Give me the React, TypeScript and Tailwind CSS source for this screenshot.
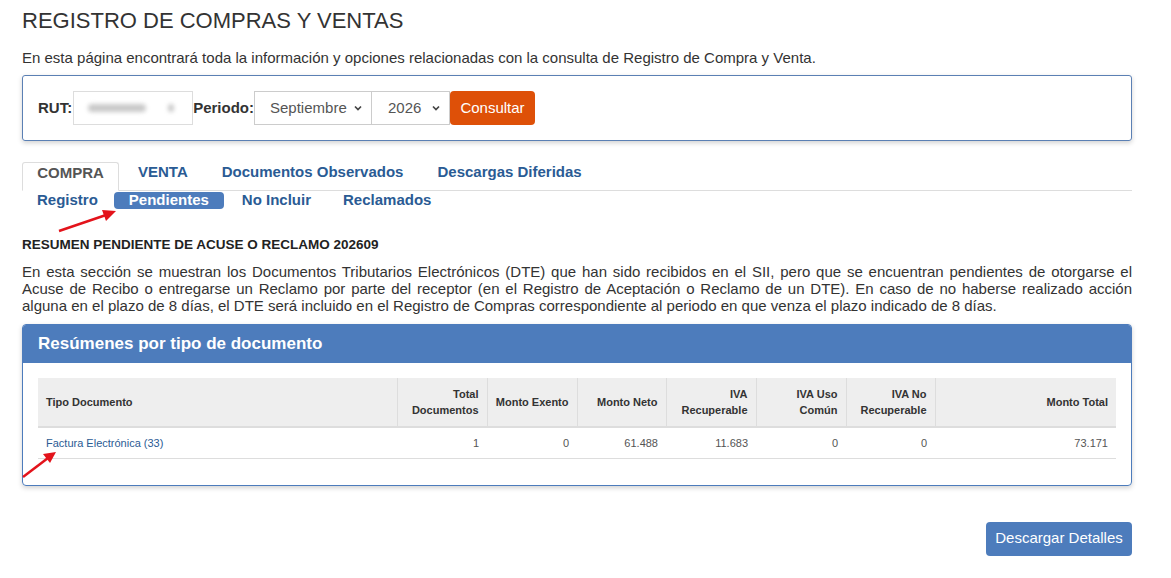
import React from "react";

const cols = [
  { label: ["Tipo Documento"], w: "w-[359px]", left: true },
  { label: ["Total", "Documentos"], w: "w-[90px]" },
  { label: ["Monto Exento"], w: "w-[90px]" },
  { label: ["Monto Neto"], w: "w-[89px]" },
  { label: ["IVA", "Recuperable"], w: "w-[90px]" },
  { label: ["IVA Uso", "Común"], w: "w-[90px]" },
  { label: ["IVA No", "Recuperable"], w: "w-[89px]" },
  { label: ["Monto Total"], w: "" },
];

const row = ["Factura Electrónica (33)", "1", "0", "61.488", "11.683", "0", "0", "73.171"];

function Chevron() {
  return (
    <svg width="10" height="10" viewBox="0 0 10 10">
      <path d="M2 3.5 5 6.5 8 3.5" fill="none" stroke="#444" strokeWidth="1.7" />
    </svg>
  );
}

export default function App() {
  return (
    <div className="relative min-h-[578px] bg-white px-[22px] pt-[8px] text-[#333] font-['Liberation_Sans',Arial,sans-serif]">
      <h1 className="text-[22px] leading-[26px] font-normal text-[#333]">
        REGISTRO DE COMPRAS Y VENTAS
      </h1>
      <p className="mt-[15px] text-[15px] leading-[17px] text-[#333]">
        En esta página encontrará toda la información y opciones relacionadas con la consulta de Registro de Compra y Venta.
      </p>

      <div className="mt-[9px] w-[1110px] h-[66px] rounded-[3px] border border-[#5b80b4] shadow-[0_2px_5px_rgba(0,0,0,0.18)] flex items-center px-[15px]">
        <span className="font-bold text-[15px]">RUT:</span>
        <div className="ml-[1px] h-[34px] w-[120px] border border-[#ddd] flex items-center px-[14px] gap-[22px]">
          <span className="h-[8px] w-[58px] rounded bg-[#c9c9c9] blur-[2px]" />
          <span className="h-[8px] w-[6px] rounded bg-[#c9c9c9] blur-[2px]" />
        </div>
        <span className="font-bold text-[15px]">Periodo:</span>
        <div className="h-[34px] w-[118px] border border-[#ccc] flex items-center justify-between pl-[15px] pr-[8px] text-[15px] text-[#555]">
          Septiembre
          <Chevron />
        </div>
        <div className="h-[34px] w-[78px] border border-l-0 border-[#ccc] flex items-center justify-between pl-[16px] pr-[8px] text-[15px] text-[#555]">
          2026
          <Chevron />
        </div>
        <button className="h-[34px] w-[85px] rounded-[4px] bg-[#de5008] text-white text-[15px]">
          Consultar
        </button>
      </div>

      <div className="mt-[21px] w-[1110px] flex items-end border-b border-[#ddd] h-[29px] text-[15px] font-bold">
        <div className="h-[29px] -mb-px w-[97px] pb-[7px] border border-[#ddd] border-b-white bg-white rounded-t-[3px] flex items-center justify-center text-[#555]">
          COMPRA
        </div>
        <div className="h-[29px] pb-[7px] flex items-center ml-[19px] text-[#2a5b94]">VENTA</div>
        <div className="h-[29px] pb-[7px] flex items-center ml-[34px] text-[#2a5b94]">Documentos Observados</div>
        <div className="h-[29px] pb-[7px] flex items-center ml-[34px] text-[#2a5b94]">Descargas Diferidas</div>
      </div>
      <div className="flex items-center text-[15px] font-bold text-[#2a5b94] h-[18px]">
        <span className="ml-[15px]">Registro</span>
        <span className="ml-[16px] h-[17px] w-[110px] rounded-[4px] bg-[#4d7cbc] text-white flex items-center justify-center">
          Pendientes
        </span>
        <span className="ml-[18px]">No Incluir</span>
        <span className="ml-[32px]">Reclamados</span>
      </div>

      <h2 className="mt-[28px] text-[13.5px] leading-[16px] font-bold text-[#222]">
        RESUMEN PENDIENTE DE ACUSE O RECLAMO 202609
      </h2>
      <p className="mt-[10px] w-[1110px] text-justify text-[15px] leading-[17px] text-[#333]">
        En esta sección se muestran los Documentos Tributarios Electrónicos (DTE) que han sido recibidos en el SII, pero que se encuentran pendientes de otorgarse el Acuse de Recibo o entregarse un Reclamo por parte del receptor (en el Registro de Aceptación o Reclamo de un DTE). En caso de no haberse realizado acción alguna en el plazo de 8 días, el DTE será incluido en el Registro de Compras correspondiente al periodo en que venza el plazo indicado de 8 días.
      </p>

      <div className="mt-[10px] w-[1110px] rounded-[4px] border border-[#4d7cbc] shadow-[0_2px_5px_rgba(0,0,0,0.18)] overflow-hidden">
        <div className="h-[38px] bg-[#4d7cbc] flex items-center px-[15px] text-white font-bold text-[17px]">
          Resúmenes por tipo de documento
        </div>
        <div className="px-[15px] pt-[15px] pb-[26px]">
          <table className="w-[1078px] border-collapse text-[11px]">
            <thead>
              <tr className="bg-[#eeeeee] h-[49px] border-b-2 border-[#ddd]">
                {cols.map((c, i) => (
                  <th
                    key={i}
                    className={`${c.w} px-[8px] font-bold leading-[16px] text-[#333] ${c.left ? "text-left" : "text-right"} ${i < cols.length - 1 ? "border-r border-[#ddd]" : ""}`}
                  >
                    {c.label.map((l, j) => (
                      <div key={j}>{l}</div>
                    ))}
                  </th>
                ))}
              </tr>
            </thead>
            <tbody>
              <tr className="h-[31px] border-b border-[#ddd]">
                {row.map((v, i) => (
                  <td
                    key={i}
                    className={`px-[8px] ${i === 0 ? "text-left text-[#2a5b94]" : "text-right text-[#555555]"}`}
                  >
                    {v}
                  </td>
                ))}
              </tr>
            </tbody>
          </table>
        </div>
      </div>

      <div className="mt-[36px] w-[1110px] flex justify-end">
        <button className="h-[34px] w-[146px] rounded-[4px] bg-[#4d7cbc] text-white text-[15px]">
          Descargar Detalles
        </button>
      </div>

      <svg className="absolute left-[56px] top-[206px]" width="64" height="28" viewBox="0 0 64 28">
        <line x1="3" y1="25" x2="50" y2="9" stroke="#e3131b" strokeWidth="2.5" />
        <polygon points="60,5 46,4 50,15" fill="#e3131b" />
      </svg>
      <svg className="absolute left-[20px] top-[448px]" width="40" height="32" viewBox="0 0 40 32">
        <line x1="3" y1="29" x2="28" y2="10" stroke="#e3131b" strokeWidth="2.5" />
        <polygon points="36,4 23,6 30,15" fill="#e3131b" />
      </svg>
    </div>
  );
}
